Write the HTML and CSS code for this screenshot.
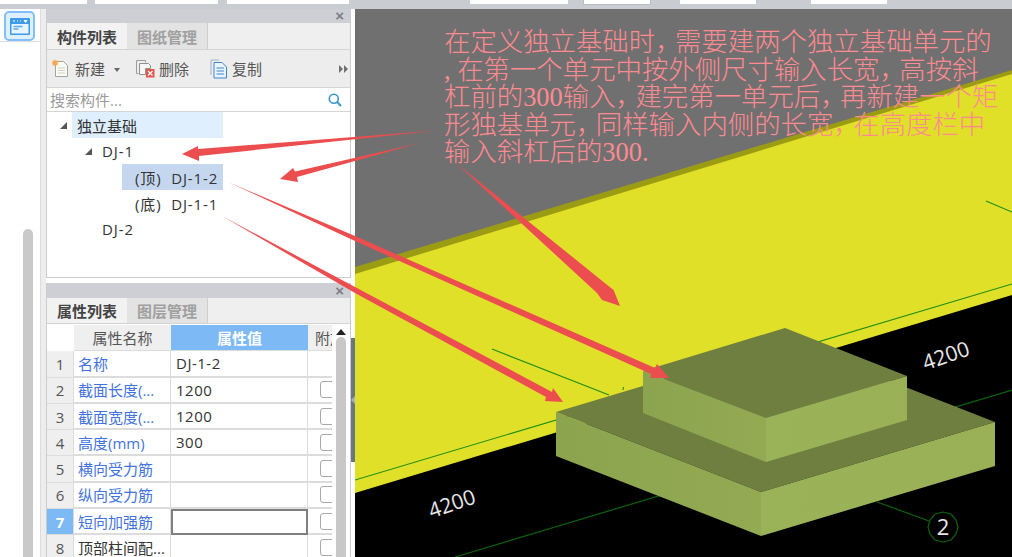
FILE: index.html
```html
<!DOCTYPE html>
<html lang="zh-CN">
<head>
<meta charset="utf-8">
<title>构件列表</title>
<link rel="stylesheet" href="styles.css">
</head>
<body>
<div class="app">
  <div class="topbar">
    <span class="field f1"></span><span class="field f2"></span><span class="field f3"></span>
    <span class="field f4"></span><span class="field f5 tall"></span><span class="field f6"></span><span class="field f7"></span>
  </div>
  <div class="main">
    <aside class="rail">
      <div class="rail-head">
        <div class="rail-btn">
          <svg width="20" height="17" viewBox="0 0 20 17"><rect width="20" height="17" rx="1" fill="#3d9be9"/><rect x="1.5" y="6" width="17" height="9.5" fill="#e8f4fe"/><path d="M3 3h2M7 3h1M10 3h1M14 2.5h3l-1.500 2z" stroke="#fff" fill="#fff"/><path d="M3.500 8.500h9M3.500 11h5" stroke="#5aaef0" stroke-width="1.300"/></svg>
        </div>
      </div>
      <div class="rail-body"><div class="rail-scroll"></div></div>
    </aside>
    <div class="gutter"></div>
    <div class="panels">
      <section class="panel top">
        <div class="panel-head"><span class="close">×</span></div>
        <div class="tabs">
          <div class="tab active">构件列表</div>
          <div class="tab">图纸管理</div>
        </div>
        <div class="toolbar">
          <div class="tool t-new">
            <svg width="18" height="19" viewBox="0 0 18 19"><path d="M3.500 2.500h8l4 4v11h-12z" fill="#fbfbf6" stroke="#a3a59c"/><path d="M6 9h7M6 11.500h7M6 14h7" stroke="#d0d0c8"/><path d="M3 0l.8 2 2-.8-.8 2 2 .8-2 .8.800 2-2-.800-.800 2-.800-2-2 .800.800-2-2-.800 2-.800-.800-2 2 .800z" fill="#f5a74b"/></svg>
            <span>新建</span><i class="caret"></i>
          </div>
          <div class="tool t-del">
            <svg width="19" height="19" viewBox="0 0 19 19"><path d="M.5 1.500h9v2M.5 1.500v13h2" fill="none" stroke="#9b9d9d"/><path d="M3.500 4.500h9l2 2v3h-5v6h-6z" fill="#f6f6f6" stroke="#8f9191"/><rect x="10" y="10" width="8.500" height="8.500" fill="#e4574f"/><path d="M12 12l4.500 4.500M16.500 12L12 16.500" stroke="#fff" stroke-width="1.200"/></svg>
            <span>删除</span>
          </div>
          <div class="tool t-copy">
            <svg width="18" height="20" viewBox="0 0 18 20"><path d="M1 16V1h8" fill="none" stroke="#9fb1c4"/><path d="M4 3.500h8l4.500 4.500v11H4z" fill="#eaf4fc" stroke="#3e86c9"/><path d="M6.500 9h7.500M6.500 12h7.500M6.500 15h7.500" stroke="#3e86c9" stroke-width="1.200"/></svg>
            <span>复制</span>
          </div>
          <div class="more">
            <svg width="9" height="8" viewBox="0 0 9 8"><path d="M0 0l4 4-4 4zM5 0l4 4-4 4z" fill="#707070"/></svg>
          </div>
        </div>
        <div class="search">
          <span class="search-text">搜索构件...</span>
          <svg width="14" height="14" viewBox="0 0 14 14"><circle cx="5.800" cy="5.800" r="4.500" fill="none" stroke="#3a94cc" stroke-width="1.600"/><path d="M9 9l4 4" stroke="#3a94cc" stroke-width="2"/></svg>
        </div>
        <div class="tree">
          <div class="node lv0"><i class="tri"></i><span class="label hl-light">独立基础</span></div>
          <div class="node lv1"><i class="tri"></i><span class="label">DJ-1</span></div>
          <div class="node lv2"><span class="label hl-blue">(顶)  DJ-1-2</span></div>
          <div class="node lv2"><span class="label">(底)  DJ-1-1</span></div>
          <div class="node lv1"><span class="label">DJ-2</span></div>
        </div>
      </section>
      <section class="panel bottom">
        <div class="panel-head"><span class="close">×</span></div>
        <div class="tabs">
          <div class="tab active">属性列表</div>
          <div class="tab">图层管理</div>
        </div>
        <div class="props">
          <div class="grid">
            <div class="corner"></div><div class="hd">属性名称</div><div class="hd sel">属性值</div><div class="hd clip">附加</div>

            <div class="num">1</div><div class="name">名称</div><div class="val">DJ-1-2</div><div class="chk"></div>
            <div class="num">2</div><div class="name">截面长度(...</div><div class="val">1200</div><div class="chk"><i></i></div>
            <div class="num">3</div><div class="name">截面宽度(...</div><div class="val">1200</div><div class="chk"><i></i></div>
            <div class="num">4</div><div class="name">高度(mm)</div><div class="val">300</div><div class="chk"><i></i></div>
            <div class="num">5</div><div class="name">横向受力筋</div><div class="val"></div><div class="chk"><i></i></div>
            <div class="num">6</div><div class="name">纵向受力筋</div><div class="val"></div><div class="chk"><i></i></div>
            <div class="num on">7</div><div class="name">短向加强筋</div><div class="val edit"></div><div class="chk"><i></i></div>
            <div class="num">8</div><div class="name plain">顶部柱间配...</div><div class="val"></div><div class="chk"><i></i></div>
          </div>
          <div class="vscroll">
            <svg class="up" width="10" height="6" viewBox="0 0 10 6"><path d="M5 0l5 6H0z" fill="#222"/></svg>
            <div class="thumb"></div>
          </div>
        </div>
      </section>
    </div>
    <div class="divider">
      <div class="splitter"><svg width="4" height="8" viewBox="0 0 4 8"><path d="M4 0L0 4l4 4z" fill="#aab2b8"/></svg></div>
    </div>
    <div class="canvas">
      <svg class="scene" width="657" height="548" viewBox="355 9 657 548">
        <defs>
          <linearGradient id="faceL" x1="0" x2="1" y1="0" y2="0"><stop offset="0" stop-color="#8da44f"/><stop offset="1" stop-color="#93aa53"/></linearGradient>
          <linearGradient id="faceR" x1="0" x2="1" y1="0" y2="0"><stop offset="0" stop-color="#9bb358"/><stop offset="1" stop-color="#99b057"/></linearGradient>
        </defs>
        <rect x="355" y="9" width="657" height="548" fill="#707070"/>
        <polygon points="355,267 1012,70 1012,557 355,557" fill="#9c9c14"/>
        <polygon points="355,274 1012,74 1012,557 355,557" fill="#e0e028"/>
        <polygon points="355,493 1012,295 1012,557 355,557" fill="#000"/>
        <path d="M355 480L1012 284M986 201l26 11M492 349l117 46M623 390l.5-3" stroke="#1b8f14" stroke-width="1.100" fill="none"/>
        <path d="M455 557L1012 390M877 502l52 19" stroke="#0b640b" stroke-width="1.200" fill="none"/>
        <polygon points="556,412 790,342 995,422 761,492" fill="#6f7f40"/>
        <polygon points="556,412 761,492 761,536 556,456" fill="url(#faceL)"/>
        <polygon points="761,492 995,422 995,466 761,536" fill="url(#faceR)"/>
        <polygon points="643,371 785,328 907,376 766,418" fill="#6f7f40"/>
        <polygon points="643,371 766,418 766,462 643,413" fill="url(#faceL)"/>
        <polygon points="766,418 907,376 907,420 766,462" fill="url(#faceR)"/>
        <polygon points="943,512 951,514 956,520 958,527 956,534 951,540 943,542 935,540 930,534 928,527 930,520 935,514" fill="#000" stroke="#0b640b" stroke-width="1.200"/>
        <text class="dim" x="452" y="511" transform="rotate(-19 452 504)">4200</text>
        <text class="dim" x="946" y="363" transform="rotate(-19 946 356)">4200</text>
        <text class="dim tag" x="943" y="535">2</text>
      </svg>
      <div class="note">
        <div>在定义独立基础时<span class="cm">&#xFF0C;</span>需要建两个独立基础单元的</div>
        <div>, 在第一个单元中按外侧尺寸输入长宽<span class="cm">&#xFF0C;</span>高按斜</div>
        <div>杠前的300输入<span class="cm">&#xFF0C;</span>建完第一单元后<span class="cm">&#xFF0C;</span>再新建一个矩</div>
        <div>形独基单元<span class="cm">&#xFF0C;</span>同样输入内侧的长宽<span class="cm">&#xFF0C;</span>在高度栏中</div>
        <div>输入斜杠后的300.</div>
      </div>
    </div>
  </div>
  <svg class="arrows" width="1012" height="557" viewBox="0 0 1012 557">
    <polygon points="437,130.500 198,149 198,146 182,154 199,161 199,156"/>
    <polygon points="420,143 295,171.500 293,168 280,179 298,182 297,177"/>
    <polygon points="456,163 606,284 613.600,290 620,306 602,300 597,293"/>
    <polygon points="228,182 355,236 655,368 657,364 669,378 650.500,378 651,374 355,241"/>
    <polygon points="222,216 355,287 552,392 553,388 563,402 545,401 546,397 355,293"/>
  </svg>
</div>
</body>
</html>
```
FILE: styles.css
```css
* { box-sizing: border-box; }
html, body { margin: 0; height: 100%; overflow: hidden; background: #fff; }
body { font-family: "Open Sans", "Noto Sans CJK SC", sans-serif; color: #333; }

.app { position: relative; width: 1012px; height: 557px; display: flex; flex-direction: column; overflow: hidden; }

.topbar { position: relative; flex: 0 0 9px; background: #c9ccd1; display: flex; align-items: flex-start; }
.field { display: block; height: 4px; background: #fff; flex: none; }
.f1 { width: 87px; }
.f2 { width: 123px; margin-left: 8px; }
.f3 { width: 122px; margin-left: 9px; }
.f4 { width: 98px; margin-left: 121px; }
.f5 { width: 68px; margin-left: 15px; }
.f6 { width: 76px; margin-left: 29px; }
.f7 { width: 76px; margin-left: 55px; }
.tall { height: 5px; border: 1px solid #b9bcc1; border-top: 0; }

.main { flex: 1; display: flex; min-height: 0; }

.rail { flex: 0 0 40px; background: #fff; display: flex; flex-direction: column; }
.rail-head { flex: 0 0 33px; padding: 2px 4px 0; border-bottom: 1px solid #dcdcdc; }
.rail-btn { width: 31px; height: 30px; border: 2px solid #83c0fa; border-radius: 5px; background: #deeffe; display: flex; align-items: center; justify-content: center; }
.rail-body { flex: 1; padding: 187px 6px 0 23px; }
.rail-scroll { height: 400px; width: 10px; background: #c9c9c9; border-radius: 5px 5px 0 0; }

.gutter { flex: 0 0 6px; background: #ededed; border-left: 1px solid #dcdcdc; }

.panels { flex: 0 0 305px; display: flex; flex-direction: column; gap: 5px; }
.panel { border: 1px solid #c9ccd1; border-top: 0; background: #fff; display: flex; flex-direction: column; }
.panel.top { flex: 0 0 269px; }
.panel.bottom { flex: 1; min-height: 0; border-bottom: 0; }

.panel-head { flex: 0 0 14px; background: #cdcfd4; display: flex; justify-content: flex-end; align-items: center; padding-right: 6px; }
.bottom .panel-head { flex-basis: 15px; }
.close { font: bold 15px/14px "Liberation Sans", sans-serif; color: #7c7f85; }

.tabs { flex: 0 0 27px; display: flex; background: #efefef; border-bottom: 1px solid #d4d4d4; }
.bottom .tabs { flex-basis: 26px; }
.tab { width: 81px; display: flex; align-items: center; justify-content: center; font-size: 15px; font-weight: 700; color: #a0a0a0; background: #e3e3e3; border-right: 1px solid #cfcfcf; }
.tab.active { width: 80px; color: #444; background: #f2f2f2; border-right: 0; }

.toolbar { flex: 0 0 38px; background: #ededed; border-bottom: 1px solid #d4d4d4; display: flex; align-items: center; font-size: 15px; color: #555; }
.tool { display: flex; align-items: center; }
.tool svg { flex: none; }
.t-new { margin-left: 5px; gap: 5px; }
.t-del { margin-left: 16px; gap: 4px; }
.t-copy { margin-left: 21px; gap: 4px; }
.caret { width: 0; height: 0; margin-left: 4px; margin-top: 3px; border: 3px solid transparent; border-top: 4px solid #666; border-bottom: 0; }
.more { margin-left: auto; padding-right: 2px; display: flex; }

.search { flex: 0 0 24px; display: flex; align-items: center; justify-content: space-between; padding: 0 8px 0 3px; border-bottom: 1px solid #d4d4d4; font-size: 15px; color: #9a9a9a; }

.tree { flex: 1; font-size: 15px; color: #333; }
.node { height: 26px; display: flex; align-items: center; }
.lv0 { padding-left: 13px; }
.lv1 { padding-left: 38px; letter-spacing: .9px; }
.lv2 { padding-left: 75px; letter-spacing: .9px; }
.tri { width: 0; height: 0; flex: none; border-style: solid; border-width: 0 0 7px 7px; border-color: transparent transparent #555 transparent; margin-right: 10px; }
.label { display: flex; align-items: center; height: 26px; white-space: pre; }
.lv1:last-child { padding-left: 55px; }
.lv0 .tri { margin-right: 5px; }
.lv0 .label { width: 151px; padding-left: 5px; }
.hl-light { background: #dfeffd; }
.hl-blue { background: #c5d7ef; }
.lv2 .label { width: 101px; padding-left: 13px; }

.props { flex: 1; display: flex; min-height: 0; overflow: hidden; }
.grid { flex: 0 0 285px; overflow: hidden; display: grid; grid-template-columns: 27px 97px 137px 24px; grid-auto-rows: 26.300px; align-content: start; padding-top: 1px; font-size: 15px; }
.corner { background: #fff; }
.hd { display: flex; align-items: center; justify-content: center; background: #efefef; color: #555; border-bottom: 1px solid #dcdcdc; white-space: nowrap; overflow: hidden; }
.hd.sel { background: #7db9f5; color: #fff; font-weight: 700; }
.hd.clip { justify-content: flex-start; padding-left: 7px; }
.num { display: flex; align-items: center; justify-content: center; background: #efefef; color: #555; font-size: 15px; border-bottom: 1px solid #dcdcdc; border-right: 1px solid #dcdcdc; }
.num.on { background: #7db9f5; color: #fff; font-weight: 700; }
.name { display: flex; align-items: center; padding-left: 4px; color: #4272e0; white-space: nowrap; overflow: hidden; border-bottom: 2px solid #dcdcdc; border-right: 1px solid #dcdcdc; }
.name.plain { color: #333; }
.val { display: flex; align-items: center; padding-left: 5px; color: #333; letter-spacing: .5px; border-bottom: 2px solid #dcdcdc; border-right: 1px solid #dcdcdc; }
.val.edit { border: 2px solid #808080; }
.chk { display: flex; align-items: center; padding-left: 12px; overflow: hidden; border-bottom: 2px solid #dcdcdc; }
.chk i { display: block; flex: none; width: 16px; height: 17px; border: 1px solid #a8a8a8; border-radius: 3px; background: #fff; }

.vscroll { flex: 1; display: flex; flex-direction: column; align-items: center; padding-top: 5px; gap: 2px; background: #fff; }
.up { flex: none; }
.thumb { width: 10px; flex: 1; background: #c8c8c8; border-radius: 5px 5px 0 0; }

.divider { flex: 0 0 4px; background: #fff; padding-top: 329px; }
.splitter { width: 4px; height: 124px; background: #6b7780; display: flex; align-items: center; }

.canvas { position: relative; flex: 1; min-width: 0; }
.scene { display: block; }
.dim { font-family: "Open Sans", "Noto Sans", sans-serif; font-size: 21px; fill: #e8e8e8; text-anchor: middle; }
.tag { font-size: 22px; }

.note { position: absolute; left: 89px; top: 20px; width: 570px; font-family: "Liberation Serif", "Noto Sans CJK SC", serif; font-size: 26.400px; line-height: 27.500px; font-weight: 300; color: #ff8a90; }
.note div { height: 27.500px; white-space: pre; }
.cm { letter-spacing: -6.500px; }

.arrows { position: absolute; left: 0; top: 0; pointer-events: none; }
.arrows polygon { fill: #ec4d4f; }
```
